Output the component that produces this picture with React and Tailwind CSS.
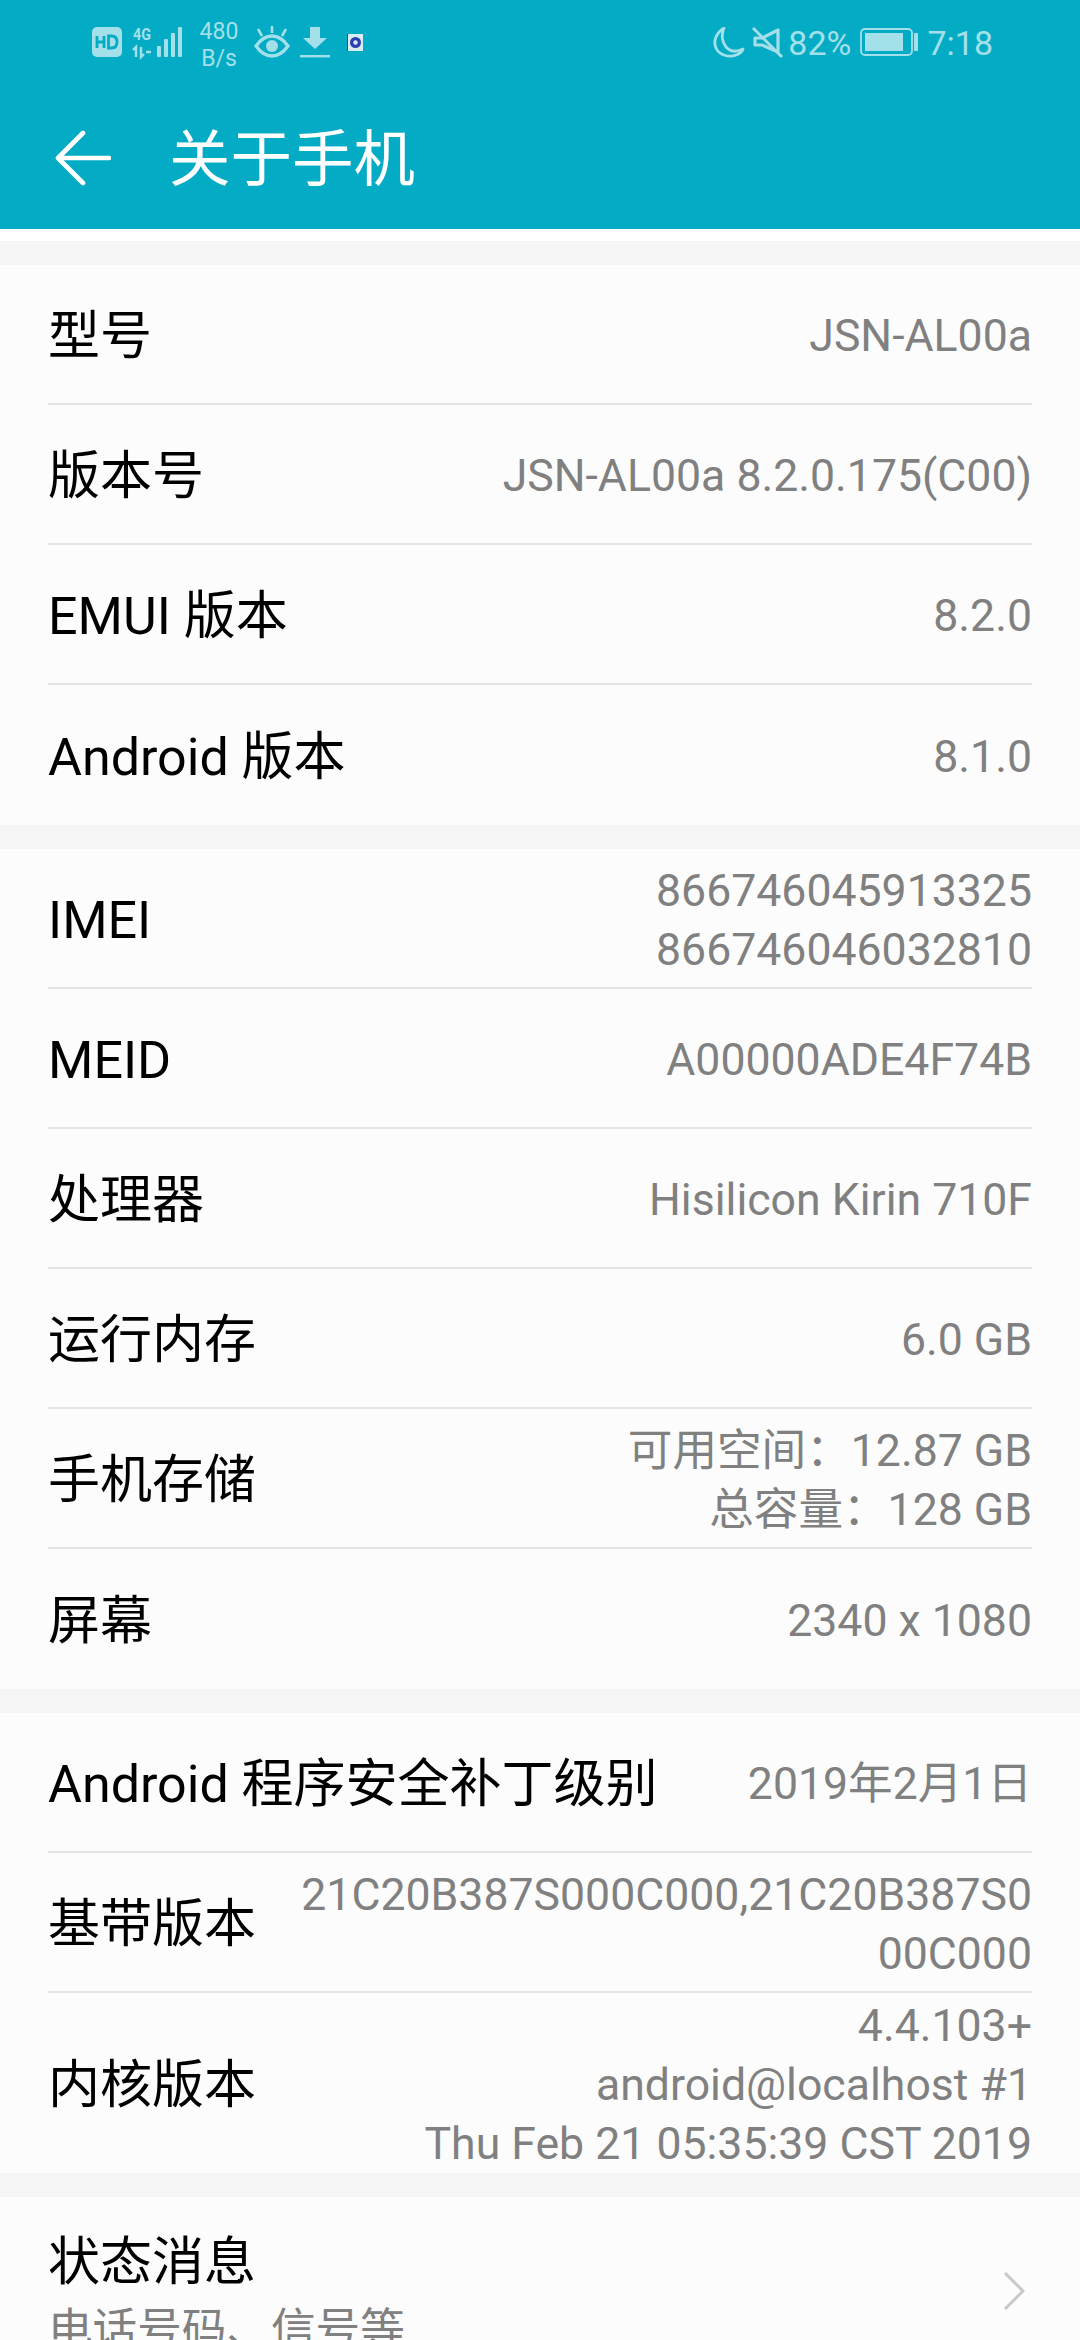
const font = { fontFamily: '"Roboto", "Noto Sans CJK SC", sans-serif' };

const sections = [
  [
    { label: "型号", value: ["JSN-AL00a"] },
    { label: "版本号", value: ["JSN-AL00a 8.2.0.175(C00)"] },
    { label: "EMUI 版本", value: ["8.2.0"] },
    { label: "Android 版本", value: ["8.1.0"] },
  ],
  [
    { label: "IMEI", value: ["866746045913325", "866746046032810"] },
    { label: "MEID", value: ["A00000ADE4F74B"] },
    { label: "处理器", value: ["Hisilicon Kirin 710F"] },
    { label: "运行内存", value: ["6.0 GB"] },
    { label: "手机存储", value: ["可用空间：12.87 GB", "总容量：128 GB"] },
    { label: "屏幕", value: ["2340 x 1080"] },
  ],
  [
    { label: "Android 程序安全补丁级别", value: ["2019年2月1日"] },
    { label: "基带版本", value: ["21C20B387S000C000,21C20B387S0", "00C000"] },
    {
      label: "内核版本",
      value: ["4.4.103+", "android@localhost #1", "Thu Feb 21 05:35:39 CST 2019"],
      tall: true,
    },
  ],
];

function StatusLeft() {
  return (
    <div className="flex items-center text-[#a3e0ea]">
      <svg width="30" height="30" viewBox="0 0 30 30" className="ml-[92px]">
        <rect width="30" height="30" rx="5" fill="#a3e0ea" />
        <path d="M5 9v12M5 15h7M12 9v12M16.500 9v12h3c3.500 0 5.500-2 5.500-6s-2-6-5.500-6z" fill="none" stroke="#04abc4" strokeWidth="2.800" />
      </svg>
      <svg width="50" height="32" viewBox="0 0 50 32" className="ml-[11px] overflow-visible">
        <text x="0" y="14" fontSize="17" fontWeight="700" fill="#a3e0ea" fontFamily="Roboto" textLength="18" lengthAdjust="spacingAndGlyphs">4G</text>
        <path d="M3 31V21l-3 3M8 21v10l3-3M13 26h5" stroke="#a3e0ea" strokeWidth="2.400" fill="none" />
        <rect x="24" y="20" width="4" height="11" rx="1" fill="#a3e0ea" />
        <rect x="31" y="13" width="4" height="18" rx="1" fill="#a3e0ea" />
        <rect x="38" y="7" width="4" height="24" rx="1" fill="#a3e0ea" />
        <rect x="45" y="1" width="4" height="30" rx="1" fill="#a3e0ea" />
      </svg>
      <div className="ml-[15px] mt-[5px] w-[42px] text-center text-[23px] leading-[27px] whitespace-nowrap">
        <div>480</div>
        <div>B/s</div>
      </div>
      <svg width="36" height="32" viewBox="0 0 36 32" className="ml-[14px]">
        <path d="M2 20c5-7 10-10 16-10s11 3 16 10c-5 7-10 10-16 10S7 27 2 20z" fill="none" stroke="#a3e0ea" strokeWidth="3.400" />
        <circle cx="18" cy="20" r="6" fill="#a3e0ea" />
        <path d="M4 3l4 7M18 0v7M32 3l-4 7" stroke="#a3e0ea" strokeWidth="2.600" />
      </svg>
      <svg width="32" height="32" viewBox="0 0 32 32" className="ml-[9px]">
        <path d="M11 1h10v11h7L16 23 4 12h7z" fill="#a3e0ea" />
        <rect x="1" y="29" width="30" height="2.400" fill="#a3e0ea" />
      </svg>
      <svg width="16" height="17" viewBox="0 0 16 17" className="ml-[16px]">
        <rect width="16" height="17" fill="#d8ecf4" />
        <rect width="1" height="17" fill="#1f4a8c" />
        <circle cx="8.500" cy="8.500" r="5.500" fill="#2a3fb0" />
        <circle cx="8.500" cy="8.500" r="2.200" fill="#dfe8f8" />
      </svg>
    </div>
  );
}

function StatusRight() {
  return (
    <div className="flex items-center text-[#a3e0ea] text-[34px] leading-none mr-[87px]">
      <svg width="32" height="31" viewBox="0 0 32 31">
        <path d="M11 1C3 6 0 14 3 21c3 7 13 10 20 7 3-1 6-3 7-6-6 3-12 3-16-1C9 15 8 8 11 1z" fill="none" stroke="#a3e0ea" strokeWidth="2.800" strokeLinejoin="round" />
      </svg>
      <svg width="32" height="31" viewBox="0 0 32 31" className="ml-[7px]">
        <path d="M3 11h7L26 3v22L10 18H3z" fill="none" stroke="#a3e0ea" strokeWidth="3.200" strokeLinejoin="round" />
        <path d="M1 1l29 29" stroke="#a3e0ea" strokeWidth="3" />
      </svg>
      <span className="ml-[4px] mt-[2px]">82%</span>
      <svg width="59" height="28" viewBox="0 0 59 28" className="ml-[9px]">
        <rect x="1" y="1" width="51" height="26" rx="4" fill="none" stroke="#a3e0ea" strokeWidth="1.800" />
        <rect x="5" y="5" width="38" height="18" fill="#a3e0ea" />
        <rect x="54" y="5" width="4" height="18" rx="1" fill="#a3e0ea" />
      </svg>
      <span className="ml-[8px] mt-[2px]">7:18</span>
    </div>
  );
}

function Row({ row, last }) {
  return (
    <div className={`mx-[48px] flex items-center justify-between ${row.tall ? "h-[180px]" : "h-[140px]"} ${last ? "" : "border-b-2 border-[#e3e3e3]"}`}>
      <div className="pt-[6px] text-[52px] leading-none text-black whitespace-nowrap">{row.label}</div>
      <div className="pt-[5px] text-right text-[44.600px] leading-[59px] text-[#808080] whitespace-nowrap">
        {row.value.map((line) => (
          <div key={line}>{line}</div>
        ))}
      </div>
    </div>
  );
}

export default function App() {
  return (
    <div className="w-[1080px] h-[2340px] overflow-hidden bg-[#fcfcfc]" style={font}>
      <div className="h-[229px] bg-[#04abc4]">
        <div className="h-[84px] flex items-center justify-between">
          <StatusLeft />
          <StatusRight />
        </div>
        <div className="h-[145px] flex items-center pt-[2px]">
          <svg width="56" height="56" viewBox="0 0 56 56" className="ml-[55px]">
            <path d="M54 28H3M28 3L3 28l25 25" fill="none" stroke="#fff" strokeWidth="4.600" strokeLinecap="round" strokeLinejoin="round" />
          </svg>
          <div className="ml-[58px] mt-[6px] text-[61.500px] leading-none text-white">关于手机</div>
        </div>
      </div>
      <div className="h-[12px] bg-white" />
      <div className="h-[24px] bg-[#f5f5f5]" />
      {sections.map((section, i) => (
        <div key={i}>
          {section.map((row, j) => (
            <Row key={row.label} row={row} last={j === section.length - 1} />
          ))}
          <div className="h-[24px] bg-[#f5f5f5]" />
        </div>
      ))}
      <div className="mx-[48px] flex items-start justify-between h-[144px] pt-[34px]">
        <div>
          <div className="text-[52px] leading-[64px] text-black whitespace-nowrap">状态消息</div>
          <div className="text-[44.600px] leading-[70px] text-[#808080] whitespace-nowrap">电话号码、信号等</div>
        </div>
        <svg width="22" height="38" viewBox="0 0 22 38" className="mt-[41px] mr-[7px]">
          <path d="M2 1l18 18L2 37" fill="none" stroke="#c8c8c8" strokeWidth="3" />
        </svg>
      </div>
    </div>
  );
}
